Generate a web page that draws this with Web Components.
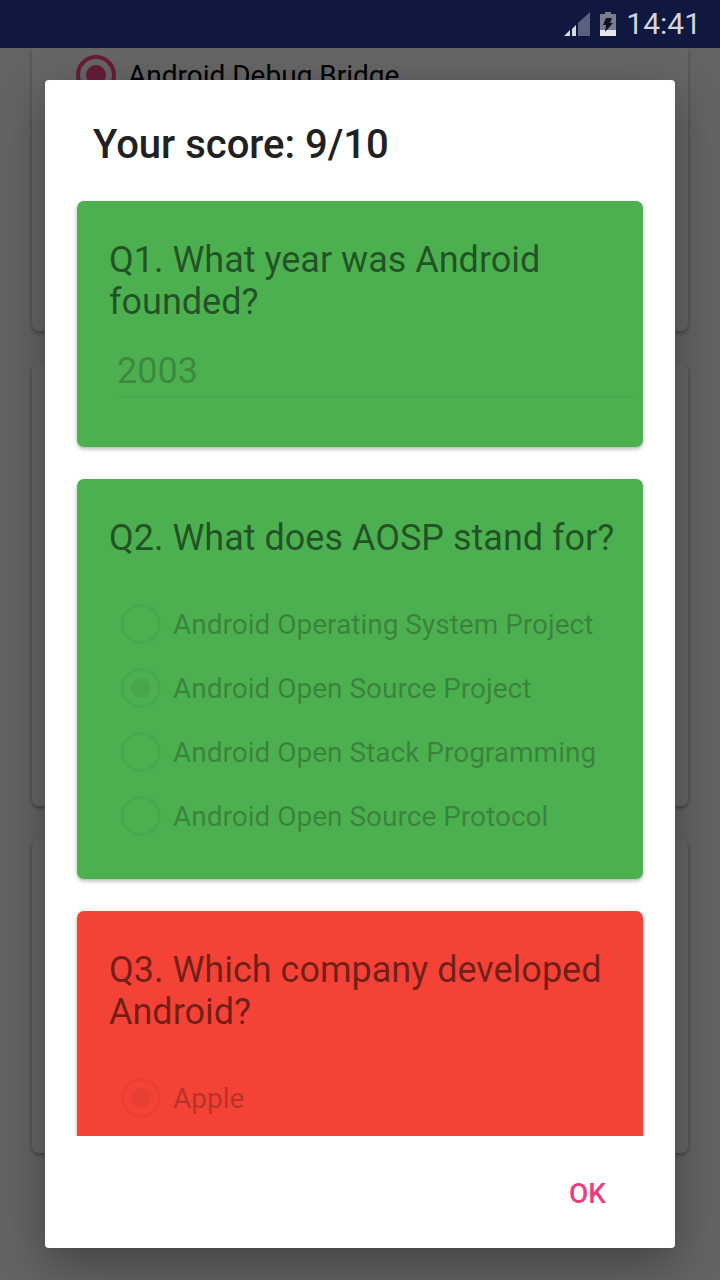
<!DOCTYPE html>
<html lang="en">
<head>
<meta charset="utf-8">
<meta name="viewport" content="width=device-width, initial-scale=1">
<title>Android Quiz</title>
<style>
html, body { height: 100%; margin: 0; overflow: hidden; }
body { font-family: Roboto, "Liberation Sans", sans-serif; }
</style>
</head>
<body>
<quiz-app></quiz-app>
<script>
const define = (name, html, setup) => {
  const tpl = document.createElement('template');
  tpl.innerHTML = html;
  customElements.define(name, class extends HTMLElement {
    connectedCallback() {
      if (this.shadowRoot) return;
      this.attachShadow({ mode: 'open' }).append(tpl.content.cloneNode(true));
      if (setup) setup(this, this.shadowRoot);
    }
  });
};

define('status-bar', `
<style>
:host { display: flex; align-items: center; justify-content: flex-end; box-sizing: border-box; height: 48px; padding-right: 19px; background: #10183f; color: #d2d4de; }
svg { display: block; width: 26px; height: 24px; }
.battery { width: 16px; margin: 0 10px; }
time { font-size: 30px; line-height: 48px; }
</style>
<svg viewBox="0 0 26 24" aria-hidden="true"><path d="M14 24V11L26 0v24z" fill="#5c6080"/><path d="M0 24 6 18v6zM8 24v-7l4-4v11z" fill="#d8dae2"/></svg>
<svg class="battery" viewBox="0 0 16 24" aria-hidden="true"><path d="M0 2h5V0h6v2h5v22H0z" fill="#777d94"/><path d="M0 18h16v6H0z" fill="#e4e5ee"/><path d="M6 6h6l-2 5h3L5 20l1-7H3z" fill="#10141c"/></svg>
<time>14:41</time>`);

define('choice-option', `
<style>
:host { display: block; }
label { display: flex; align-items: center; gap: 12px; box-sizing: border-box; height: var(--row-height, 64px); padding: 0 0 2px 12px; font-size: 28px; line-height: 32px; color: var(--choice-text, rgba(0,0,0,.26)); white-space: nowrap; }
span { padding-top: 2px; }
input { appearance: none; flex: none; box-sizing: border-box; width: 40px; height: 40px; margin: 0; border: var(--ring, 3px) solid var(--choice-ink, rgba(0,0,0,.04)); border-radius: 50%; display: grid; place-items: center; }
input:checked::before { content: ""; width: 20px; height: 20px; border-radius: 50%; background: var(--choice-ink, rgba(0,0,0,.05)); }
</style>
<label><input type="radio"><span><slot></slot></span></label>`, (el, root) => {
  const input = root.querySelector('input');
  input.checked = el.hasAttribute('checked');
  input.disabled = el.hasAttribute('disabled');
});

define('answer-field', `
<style>
:host { display: block; padding: 27px 0 19px 8px; }
input { display: block; box-sizing: border-box; width: 100%; height: 48px; margin: 0; padding: 0 0 4px; border: 0; border-bottom: 2px solid rgba(0,0,0,.03); border-radius: 0; background: none; font: 36px/42px Roboto, "Liberation Sans", sans-serif; color: rgba(0,0,0,.22); }
</style>
<input type="text" disabled>`, (el, root) => {
  const input = root.querySelector('input');
  input.value = el.getAttribute('value');
  input.setAttribute('aria-label', el.getAttribute('label'));
});

define('result-card', `
<style>
:host { display: block; box-sizing: border-box; padding: 38px 7px 30px 32px; border-radius: 7px; background: #4caf50; box-shadow: 0 2px 4px rgba(0,0,0,.3); }
:host([wrong]) { background: #f44336; }
h3 { margin: 0; font-size: 36px; line-height: 42px; font-weight: 400; color: rgba(0,0,0,.54); }
.choices { padding-top: 34px; }
</style>
<h3><slot name="question"></slot></h3>
<slot name="field"></slot>
<div class="choices"><slot></slot></div>`, (el, root) => {
  if (!el.querySelector('choice-option')) root.querySelector('.choices').remove();
});

define('quiz-page', `
<style>
:host { display: flex; flex-direction: column; gap: 32px; padding: 0 32px; background: #fafafa; }
section { box-sizing: border-box; flex: none; min-height: 443px; padding: 0 32px; border-radius: 7px; background: #fff; box-shadow: 0 2px 4px rgba(0,0,0,.35); }
section:first-of-type { min-height: 283px; border-radius: 0 0 7px 7px; }
section:last-of-type { min-height: 315px; }
choice-option { --row-height: 56px; --ring: 4px; --choice-text: #000; --choice-ink: #ff4890; }
</style>
<section><choice-option checked>Android Debug Bridge</choice-option></section>
<section></section>
<section></section>`);

define('score-dialog', `
<style>
:host { display: flex; flex-direction: column; box-sizing: border-box; min-height: 0; border-radius: 4px; background: #fff; box-shadow: 0 16px 48px rgba(0,0,0,.35); overflow: hidden; }
h2 { margin: 0; padding: 41px 48px 0; font-size: 40px; line-height: 48px; font-weight: 500; color: #212121; }
.results { flex: 1; min-height: 0; overflow: hidden; display: flex; flex-direction: column; gap: 32px; padding: 32px 32px 0; }
::slotted(*) { flex: none; }
footer { display: flex; justify-content: flex-end; padding: 22px 45px 18px; }
button { height: 72px; margin: 0; padding: 0 24px; border: 0; background: none; font: 500 28px/32px Roboto, "Liberation Sans", sans-serif; color: #f03c80; }
</style>
<h2><slot name="title"></slot></h2>
<div class="results"><slot></slot></div>
<footer><button type="button">OK</button></footer>`, (el) => {
  el.setAttribute('role', 'dialog');
});

define('quiz-app', `
<style>
:host { display: grid; grid-template-rows: auto minmax(0, 1fr); height: 100vh; overflow: hidden; }
main { display: grid; min-height: 0; grid-template: minmax(0, 1fr) / minmax(0, 1fr); }
quiz-page, .scrim { grid-area: 1 / 1; min-height: 0; }
quiz-page { overflow: hidden; }
.scrim { z-index: 1; display: grid; grid-template: minmax(0, 1fr) / minmax(0, 1fr); padding: 32px 45px; background: rgba(0,0,0,.6); }
</style>
<status-bar></status-bar>
<main>
<quiz-page></quiz-page>
<div class="scrim">
<score-dialog>
<span slot="title">Your score: 9/10</span>
<result-card>
<span slot="question">Q1. What year was Android founded?</span>
<answer-field slot="field" label="Year" value="2003"></answer-field>
</result-card>
<result-card>
<span slot="question">Q2. What does AOSP stand for?</span>
<choice-option disabled>Android Operating System Project</choice-option>
<choice-option disabled checked>Android Open Source Project</choice-option>
<choice-option disabled>Android Open Stack Programming</choice-option>
<choice-option disabled>Android Open Source Protocol</choice-option>
</result-card>
<result-card wrong>
<span slot="question">Q3. Which company developed Android?</span>
<choice-option disabled checked>Apple</choice-option>
</result-card>
</score-dialog>
</div>
</main>`);
</script>
</body>
</html>
